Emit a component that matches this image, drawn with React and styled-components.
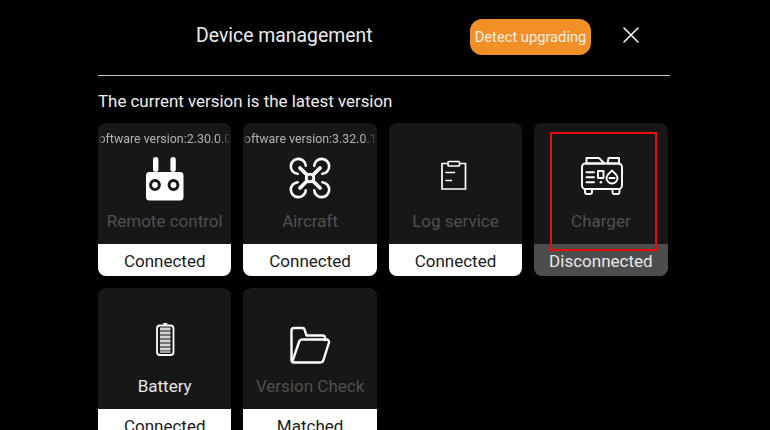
import React from "react";
import styled, { createGlobalStyle } from "styled-components";

const Global = createGlobalStyle`
  html, body { margin: 0; padding: 0; background: #000; }
  body { width: 770px; height: 430px; overflow: hidden; font-family: Roboto, "Liberation Sans", sans-serif; }
`;

const Page = styled.div`
  width: 770px;
  height: 430px;
  overflow: hidden;
  background: #000;
  position: relative;
  padding: 0 100px 0 98px;
  box-sizing: border-box;
`;

const Header = styled.header`
  height: 75px;
  display: flex;
  align-items: center;
  border-bottom: 1px solid #c4c4c4;
  box-sizing: content-box;
`;

const Title = styled.h1`
  margin: 0 0 3px 98px;
  width: 274px;
  font-size: 19.4px;
  line-height: 24px;
  font-weight: 400;
  color: #ececec;
  white-space: nowrap;
`;

const UpgradeButton = styled.button`
  width: 121px;
  height: 36px;
  margin: 0 0 2px 0;
  padding: 0;
  border: 0;
  border-radius: 12px;
  background: #f38f27;
  color: #f6f0e4;
  font: 400 14.7px/36px Roboto, "Liberation Sans", sans-serif;
  white-space: nowrap;
`;

const CloseButton = styled.button`
  width: 20px;
  height: 20px;
  margin: 0 0 6px 30px;
  padding: 0;
  border: 0;
  background: none;
  display: flex;
  align-items: center;
  justify-content: center;
`;

const Status = styled.p`
  margin: 15px 0 12px;
  font-size: 16.9px;
  line-height: 20px;
  color: #eee;
  white-space: nowrap;
`;

const Grid = styled.div`
  width: 570px;
  display: grid;
  grid-template-columns: repeat(4, 133.4px);
  grid-auto-rows: 153px;
  gap: 12px;
`;

const Card = styled.article`
  border-radius: 8px;
  overflow: hidden;
  background: #171717;
  display: flex;
  flex-direction: column;
  align-items: center;
`;

const Version = styled.div`
  width: 100%;
  height: 27px;
  padding-top: 7px;
  box-sizing: border-box;
  display: flex;
  justify-content: center;
  overflow: hidden;
  font-size: 12.4px;
  line-height: 17px;
  color: #b4b4b4;
  white-space: nowrap;
  mask-image: linear-gradient(to right, transparent 0, #000 7px, #000 calc(100% - 14px), transparent 100%);
`;

const Label = styled.div`
  height: 22px;
  font-size: 17px;
  line-height: 22px;
  color: ${(p) => (p.$active ? "#e6e6e6" : "#4f4f4f")};
  white-space: nowrap;
`;

const Band = styled.div`
  margin-top: auto;
  width: 100%;
  height: 32px;
  padding-top: 1px;
  box-sizing: border-box;
  display: flex;
  align-items: center;
  justify-content: center;
  font-size: 17px;
  background: ${(p) => (p.$off ? "#4d4d4d" : "#fff")};
  color: ${(p) => (p.$off ? "#e8e8e8" : "#1a1a1a")};
`;

const Highlight = styled.div`
  position: absolute;
  left: 550px;
  top: 132px;
  width: 107px;
  height: 119px;
  box-sizing: border-box;
  border: 2px solid #e90c0c;
  pointer-events: none;
`;

const Glyph = styled.svg`
  display: block;
  width: 60px;
  height: 60px;
  flex: none;
  fill: none;
  stroke: #fff;
  stroke-linecap: round;
  stroke-linejoin: round;
`;

const RemoteIcon = () => (
  <Glyph viewBox="0 0 60 60">
    <rect x="18" y="7" width="5.4" height="15" rx="2.7" fill="#fff" stroke="none" />
    <rect x="35.4" y="7" width="5.4" height="15" rx="2.7" fill="#fff" stroke="none" />
    <rect x="11" y="22" width="37.5" height="28.5" rx="3.5" fill="#fff" stroke="none" />
    <circle cx="20" cy="35" r="4.4" stroke="#171717" strokeWidth="3" />
    <circle cx="38.5" cy="35" r="4.4" stroke="#171717" strokeWidth="3" />
  </Glyph>
);

const rotor = "M17.65 23.8 A7.5 7.5 0 1 1 25.8 15.65";

const DroneIcon = () => (
  <Glyph viewBox="0 0 60 60" strokeWidth="2.6">
    <path d="M20 18 L40 38 M40 18 L20 38" strokeWidth="3.8" />
    <path d={rotor} />
    <path d={rotor} transform="translate(60 0) scale(-1 1)" />
    <path d={rotor} transform="translate(0 56) scale(1 -1)" />
    <path d={rotor} transform="translate(60 56) scale(-1 -1)" />
    <circle cx="30" cy="28" r="5.2" fill="#fff" stroke="none" />
    <circle cx="30" cy="28" r="2.4" fill="#2a2a2a" stroke="none" />
  </Glyph>
);

const LogIcon = () => (
  <Glyph viewBox="0 0 60 60" strokeWidth="1.7">
    <path d="M22.5 13.5 H17 V39 H40.5 V13.5 H35" strokeLinejoin="miter" strokeLinecap="butt" />
    <rect x="23" y="11.5" width="11.5" height="4.5" rx="1" />
    <path d="M21 22.5 H29.5 M21 30.5 H26.5" strokeWidth="1.6" />
  </Glyph>
);

const ChargerIcon = () => (
  <Glyph viewBox="0 0 60 60" strokeWidth="1.9">
    <rect x="11" y="13.5" width="40" height="25.5" rx="3.5" />
    <path d="M15.5 8 H28 L33.5 13.5 H15.5 Z" />
    <path d="M37.5 8 H48 V13.5 H36.5 Z" />
    <path d="M14 39 V42 A2 2 0 0 0 16 44 H19 A2 2 0 0 0 21 42 V39 M41.5 39 V42 A2 2 0 0 0 43.5 44 H46.5 A2 2 0 0 0 48.5 42 V39" />
    <path d="M15.5 22.3 H23 M15.5 27.3 H23 M15.5 32.3 H23" />
    <rect x="27" y="21" width="5.5" height="7" />
    <path d="M29.8 32.3 H30" strokeWidth="2.4" />
    <path d="M41 20.5 C43 23 46.5 24.5 46.5 28 A5.5 5.5 0 1 1 35.5 28 C35.5 24.5 39 23 41 20.5 Z" />
    <path d="M38.5 28 H43.5" />
  </Glyph>
);

const BatteryIcon = () => (
  <Glyph viewBox="0 0 60 60" strokeWidth="1.8">
    <rect x="22" y="10.5" width="16.5" height="29.5" rx="3" />
    <path d="M29 8.8 H31.5" />
    <path
      d="M25 14 H35.5 M25 18 H35.5 M25 22 H35.5 M25 26 H35.5 M25 30 H35.5 M25 34 H35.5"
      strokeWidth="3"
      stroke="#d4d4d4"
      strokeLinecap="butt"
    />
    <path d="M25 37 H35.5" strokeWidth="1.6" stroke="#d4d4d4" strokeLinecap="butt" />
  </Glyph>
);

const FolderIcon = () => (
  <Glyph viewBox="0 0 60 60" strokeWidth="2.4">
    <path d="M15 47.5 H14 A2.5 2.5 0 0 1 11.5 45 V15.5 A2.5 2.5 0 0 1 14 13 H22.5 A2 2 0 0 1 24.5 14.5 L26.5 20.5 H42.5 A2.5 2.5 0 0 1 45 23 V25" />
    <path d="M15 47.5 H40.5 A3 3 0 0 0 43.3 45.5 L49 27.5 A2.5 2.5 0 0 0 46.5 24.5 H22 A3 3 0 0 0 19.2 26.5 L12.5 46" />
  </Glyph>
);

const CloseIcon = () => (
  <svg width="20" height="20" viewBox="0 0 20 20" fill="none" stroke="#f4f4f4" strokeWidth="1.6" strokeLinecap="round">
    <path d="M3 3 L17 17 M17 3 L3 17" />
  </svg>
);

const devices = [
  { version: "Software version:2.30.0.06", icon: <RemoteIcon />, label: "Remote control", state: "Connected" },
  { version: "Software version:3.32.0.16", icon: <DroneIcon />, label: "Aircraft", state: "Connected" },
  { icon: <LogIcon />, label: "Log service", state: "Connected" },
  { icon: <ChargerIcon />, label: "Charger", state: "Disconnected", off: true },
  { icon: <BatteryIcon />, label: "Battery", state: "Connected", active: true },
  { icon: <FolderIcon />, label: "Version Check", state: "Matched" },
];

export default function App() {
  return (
    <Page>
      <Global />
      <Header>
        <Title>Device management</Title>
        <UpgradeButton>Detect upgrading</UpgradeButton>
        <CloseButton aria-label="Close"><CloseIcon /></CloseButton>
      </Header>
      <Status>The current version is the latest version</Status>
      <Grid>
        {devices.map((d) => (
          <Card key={d.label}>
            <Version>{d.version}</Version>
            {d.icon}
            <Label $active={d.active}>{d.label}</Label>
            <Band $off={d.off}>{d.state}</Band>
          </Card>
        ))}
      </Grid>
      <Highlight />
    </Page>
  );
}
